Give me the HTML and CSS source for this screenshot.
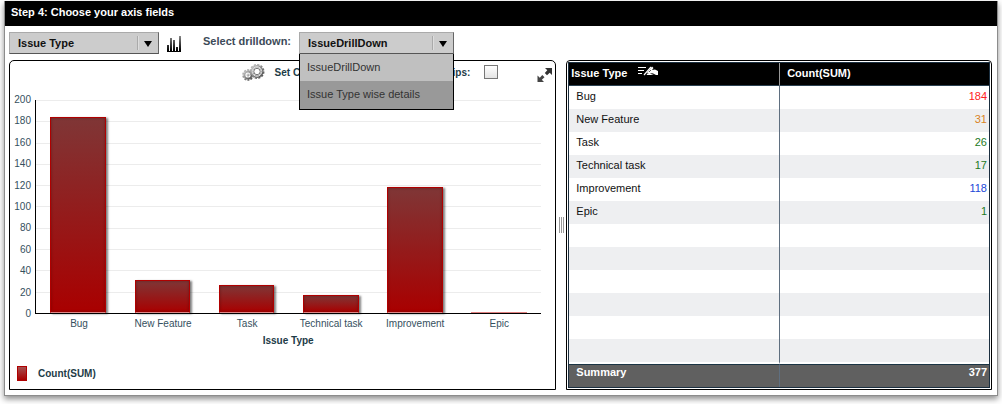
FILE: index.html
```html
<!DOCTYPE html>
<html lang="en">
<head>
  <meta charset="UTF-8">
  <title>Choose your axis fields</title>
  <link rel="stylesheet" href="styles.css">
</head>
<body>
  <main class="window">
    <h1 class="window-title">Step 4: Choose your axis fields</h1>

    <div class="toolbar">
      <div class="picker picker-axis">
        <select aria-label="Axis field">
          <option>Issue Type</option>
        </select>
      </div>
      <svg class="chart-icon" width="15" height="16" viewBox="0 0 15 16">
        <defs>
          <linearGradient id="barFade" x1="0" y1="0" x2="0" y2="16" gradientUnits="userSpaceOnUse">
            <stop offset="0" stop-color="#888"/>
            <stop offset="0.9" stop-color="#000"/>
          </linearGradient>
        </defs>
        <path d="M0 9h2v6H0zM3 2h2v13H3zM6 4h2v11H6zM9 11h2v4H9zM12 0h2v15h-2zM0 15h14v1H0z" fill="url(#barFade)"/>
      </svg>
      <label class="picker-label" for="drilldown">Select drilldown:</label>
      <div class="picker picker-drill">
        <select id="drilldown">
          <option>IssueDrillDown</option>
          <option>Issue Type wise details</option>
        </select>
        <ul class="menu">
          <li class="active">IssueDrillDown</li>
          <li>Issue Type wise details</li>
        </ul>
      </div>
    </div>

    <div class="panels">
      <section class="chart-panel">
        <div class="chart-options">
          <svg width="23" height="17" viewBox="0 0 23 17">
            <defs>
              <linearGradient id="metal" x1="0" y1="0" x2="1" y2="1">
                <stop offset="0" stop-color="#c4c4c4"/>
                <stop offset="1" stop-color="#4a4a4a"/>
              </linearGradient>
            </defs>
            <g fill="none" stroke="url(#metal)">
              <circle cx="6" cy="11" r="5" stroke-width="1.6" stroke-dasharray="2 1.14"/>
              <circle cx="6" cy="11" r="3.6" stroke-width="2"/>
              <circle cx="6" cy="11" r="1.1" stroke-width="0.8"/>
              <circle cx="15" cy="7.5" r="6.8" stroke-width="1.4" stroke-dasharray="2.2 1.36"/>
              <circle cx="15" cy="7.5" r="5.2" stroke-width="2.6"/>
            </g>
            <circle cx="15" cy="7.5" r="4.8" fill="none" stroke="#ddd" stroke-width="1"/>
            <circle cx="15" cy="7.5" r="3.2" fill="#fff" stroke="#666" stroke-width="0.9"/>
          </svg>
          <span class="option-title">Set Color</span>
          <label for="tips">Tips:</label>
          <input type="checkbox" id="tips">
          <svg class="expand" width="16" height="16" viewBox="0 0 16 16" fill="#333">
            <path d="M8 1h7v7l-2.300-2.300-2.700 2.500-2.200-2.200 2.500-2.700z"/>
            <path d="M0.500 8.500v6.500h6.500l-2.200-2.300 2.700-2.500-2.200-2.200-2.500 2.700z" fill="#444"/>
          </svg>
        </div>

        <div class="chart">
          <div class="y-axis">
            <span>200</span><span>180</span><span>160</span><span>140</span><span>120</span><span>100</span><span>80</span><span>60</span><span>40</span><span>20</span><span>0</span>
          </div>
          <div class="plot">
            <div class="gridlines">
              <i></i><i></i><i></i><i></i><i></i><i></i><i></i><i></i><i></i><i></i>
            </div>
            <div class="bars">
              <div class="bar" style="height: 92%"></div>
              <div class="bar" style="height: 15.5%"></div>
              <div class="bar" style="height: 13%"></div>
              <div class="bar" style="height: 8.5%"></div>
              <div class="bar" style="height: 59%"></div>
              <div class="bar thin" style="height: 0.5%"></div>
            </div>
          </div>
          <div class="x-axis">
            <span>Bug</span><span>New Feature</span><span>Task</span><span>Technical task</span><span>Improvement</span><span>Epic</span>
          </div>
          <div class="x-title">Issue Type</div>
        </div>

        <div class="legend"><span class="swatch"></span>Count(SUM)</div>
      </section>

      <div class="splitter"><span class="grip"></span></div>

      <section class="table-panel">
        <table>
          <thead>
            <tr>
              <th>Issue Type
                <svg class="edit-icon" width="21" height="10" viewBox="0 0 21 10">
                  <path d="M0 1.500h8M0 4.500h6M0 7.500h4" stroke="#fff" fill="none"/>
                  <path d="M6 9L13 1" stroke="#fff" stroke-width="1.200"/>
                  <path d="M10 5.500L14 0.500l1.500 1.500L14 4l3-.500 3 1.500V9h-2l-2-1-3 1H8.500l1-1.500h2L9 7z" fill="#fff"/>
                  <path d="M11 6l2-2M12.500 7.500h3" stroke="#333" stroke-width="0.800"/>
                </svg>
              </th>
              <th>Count(SUM)</th>
            </tr>
          </thead>
          <tbody>
            <tr><td>Bug</td><td class="red">184</td></tr>
            <tr><td>New Feature</td><td class="orange">31</td></tr>
            <tr><td>Task</td><td class="green">26</td></tr>
            <tr><td>Technical task</td><td class="green">17</td></tr>
            <tr><td>Improvement</td><td class="blue">118</td></tr>
            <tr><td>Epic</td><td class="green">1</td></tr>
            <tr><td></td><td></td></tr>
            <tr><td></td><td></td></tr>
            <tr><td></td><td></td></tr>
            <tr><td></td><td></td></tr>
            <tr><td></td><td></td></tr>
            <tr><td></td><td></td></tr>
          </tbody>
          <tfoot>
            <tr><td>Summary</td><td>377</td></tr>
          </tfoot>
        </table>
      </section>
    </div>
  </main>
</body>
</html>
```

FILE: styles.css
```css
* {
  box-sizing: border-box;
}

body {
  margin: 0;
  padding: 1px 4px 8px;
  background: #fff;
  font-family: "Liberation Sans", Arial, sans-serif;
  font-size: 11px;
  color: #111;
}

.window {
  border: 1px solid #8c8c8c;
  border-top: 0;
  background: #fff;
  box-shadow: 0 3px 6px rgba(0, 0, 0, 0.45);
}

.window-title {
  margin: 0;
  padding: 0 6px 2px;
  background: #000;
  color: #fff;
  font-size: 11px;
  line-height: 23px;
}

/* toolbar */

.toolbar {
  display: flex;
  align-items: flex-start;
  padding: 6px 4px;
}

.picker {
  position: relative;
  height: 22px;
}

.picker-axis {
  width: 150px;
}

.picker-drill {
  width: 155px;
}

.picker select {
  appearance: none;
  display: block;
  width: 100%;
  height: 22px;
  padding: 0 28px 0 8px;
  border: 1px solid #aaa;
  border-right: 1px solid #666;
  border-bottom: 1px solid #555;
  border-radius: 0;
  background: #ccc;
  color: #111;
  font: bold 11px "Liberation Sans", Arial, sans-serif;
}

.picker::before {
  content: "";
  position: absolute;
  top: 4px;
  right: 20px;
  height: 14px;
  border-left: 1px solid #aaa;
  border-right: 1px solid #ddd;
}

.picker::after {
  content: "";
  position: absolute;
  top: 9px;
  right: 7px;
  border: 4px solid transparent;
  border-top: 6px solid #000;
  border-bottom: 0;
}

.chart-icon {
  margin: 4px 21px 0 8px;
}

.picker-label {
  margin-right: 8px;
  color: #3c4a58;
  font-weight: bold;
  line-height: 19px;
}

.menu {
  position: absolute;
  z-index: 2;
  top: 22px;
  left: 0;
  width: 100%;
  margin: 0;
  padding: 0 0 1px;
  list-style: none;
  border: 1px solid #000;
  border-top: 0;
  background: #999;
  color: #333;
}

.menu li {
  padding: 0 7px;
  line-height: 27px;
}

.menu .active {
  background: #c0c0c0;
}

/* chart */

.panels {
  display: grid;
  grid-template-columns: 9fr 10px 7fr;
  padding: 0 5px 5px 4px;
}

.chart-panel {
  border: 1px solid #000;
  border-radius: 5px 5px 0 0;
  color: #1d3b47;
}

.chart-options {
  display: flex;
  align-items: center;
  height: 22px;
  padding: 0 2px;
  font-size: 10px;
  font-weight: bold;
}

.chart-options svg:first-child {
  margin-left: auto;
}

.option-title {
  width: 172px;
  margin-left: 10px;
}

.chart-options input {
  appearance: none;
  width: 14px;
  height: 14px;
  margin: 0 39px 0 14px;
  border: 1px solid #777;
  background: linear-gradient(#fff, #e4e4e4);
}

.expand {
  align-self: flex-end;
}

.chart {
  display: grid;
  grid-template-columns: 21px 1fr;
  column-gap: 4px;
  padding: 17px 14px 0 0;
  font-size: 10px;
  color: #35505e;
}

.y-axis {
  display: flex;
  flex-direction: column;
  justify-content: space-between;
  margin: -6px 0;
  line-height: 12px;
  text-align: right;
}

.plot {
  display: grid;
  height: 214px;
  border-left: 1px solid #000;
  border-bottom: 1px solid #000;
}

.gridlines,
.bars {
  grid-area: 1 / 1;
  height: 213px;
}

.gridlines {
  display: flex;
  flex-direction: column;
}

.gridlines i {
  flex: 1;
  border-top: 1px solid #ececec;
}

.bars {
  display: grid;
  grid-template-columns: repeat(6, 1fr);
  align-items: end;
  justify-items: center;
}

.bar {
  width: 66%;
  border: 1px solid #b00000;
  border-bottom: 1px solid #d88;
  background: linear-gradient(#7f3636, #a90000);
  box-shadow: 2px 1px 2px rgba(0, 0, 0, 0.5), inset 0 0 3px rgba(70, 0, 0, 0.4);
}

.bar.thin {
  border: 0;
  background: #e08080;
  box-shadow: none;
}

.x-axis {
  grid-column: 2;
  display: grid;
  grid-template-columns: repeat(6, 1fr);
  padding: 4px 0 0 2px;
  line-height: 12px;
  text-align: center;
  white-space: nowrap;
}

.x-title {
  grid-column: 2;
  padding-top: 5px;
  line-height: 12px;
  font-weight: bold;
  text-align: center;
  color: #1d3b47;
}

.legend {
  display: flex;
  align-items: center;
  padding: 19px 7px 8px;
  font-size: 10px;
  font-weight: bold;
}

.swatch {
  width: 10px;
  height: 15px;
  margin-right: 11px;
  border: 1px solid #b00000;
  background: linear-gradient(#a65050, #a90000);
}

.splitter {
  display: flex;
  align-items: center;
  justify-content: center;
}

.grip {
  width: 5px;
  height: 16px;
  background: repeating-linear-gradient(to right, #999 0 1px, #fff 1px 2px);
}

/* table */

.table-panel {
  padding: 1px;
  border: 1px solid #000;
  border-radius: 4px 4px 0 0;
}

table {
  width: 100%;
  table-layout: fixed;
  border: 1px solid #1b2f40;
  border-spacing: 0;
  line-height: 13px;
}

th,
td {
  height: 23px;
  padding: 0 7px;
  text-align: left;
}

th {
  padding: 0 2px 2px;
  border-bottom: 1px solid #2a4050;
  background: #000;
  color: #fff;
}

th + th {
  padding-left: 7px;
  border-left: 1px solid #999;
}

td + td {
  padding-right: 2px;
  border-left: 1px solid #5f6f80;
  text-align: right;
}

.edit-icon {
  margin-left: 8px;
  vertical-align: 1px;
}

tbody td {
  padding-bottom: 2px;
}

tbody tr:nth-child(even) {
  background: #eeeff1;
}

tbody tr:last-child td {
  height: 25px;
  border-bottom: 2px solid #fff;
}

tfoot td {
  height: 23px;
  padding-bottom: 7px;
  border-top: 1px solid #1b3545;
  background: #606060;
  color: #fff;
  font-weight: bold;
}

.red {
  color: #f22;
}

.orange {
  color: #d98324;
}

.green {
  color: #1d7a1d;
}

.blue {
  color: #2148d8;
}
```
